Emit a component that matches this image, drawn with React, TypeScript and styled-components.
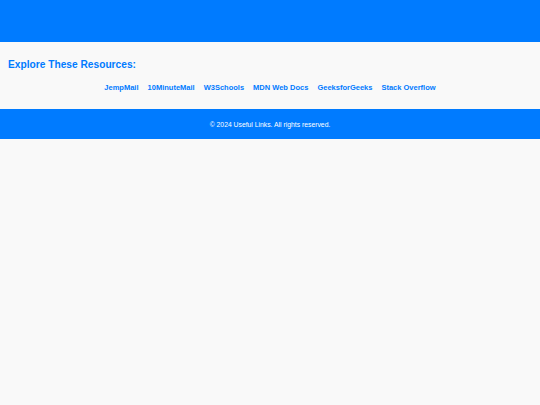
import React from 'react'
import styled, { createGlobalStyle } from 'styled-components'

const GlobalStyle = createGlobalStyle`
  html, body {
    margin: 0;
    padding: 0;
    background-color: #f9f9f9;
    font-family: "Liberation Sans", Arial, sans-serif;
  }
`

const Header = styled.header`
  height: 42px;
  background-color: #007bff;
`

const Section = styled.section`
  display: flex;
  flex-direction: column;
  padding: 17px 8px 17px;
`

const Title = styled.h2`
  margin: 0;
  font-size: 10.2px;
  line-height: 12px;
  font-weight: bold;
  color: #007bff;
`

const Links = styled.nav`
  display: flex;
  justify-content: center;
  gap: 9px;
  margin-top: 12px;
`

const Link = styled.a`
  font-size: 7.5px;
  line-height: 9px;
  font-weight: bold;
  color: #007bff;
  text-decoration: none;
  white-space: nowrap;
`

const Footer = styled.footer`
  display: flex;
  justify-content: center;
  align-items: center;
  height: 30px;
  background-color: #007bff;
  color: white;
  font-size: 6.8px;
`

const resources = [
  'JempMail',
  '10MinuteMail',
  'W3Schools',
  'MDN Web Docs',
  'GeeksforGeeks',
  'Stack Overflow',
]

export default function App() {
  return (
    <div>
      <GlobalStyle />
      <Header />
      <Section>
        <Title>Explore These Resources:</Title>
        <Links>
          {resources.map((name) => (
            <Link key={name} href="#">
              {name}
            </Link>
          ))}
        </Links>
      </Section>
      <Footer>© 2024 Useful Links. All rights reserved.</Footer>
    </div>
  )
}
